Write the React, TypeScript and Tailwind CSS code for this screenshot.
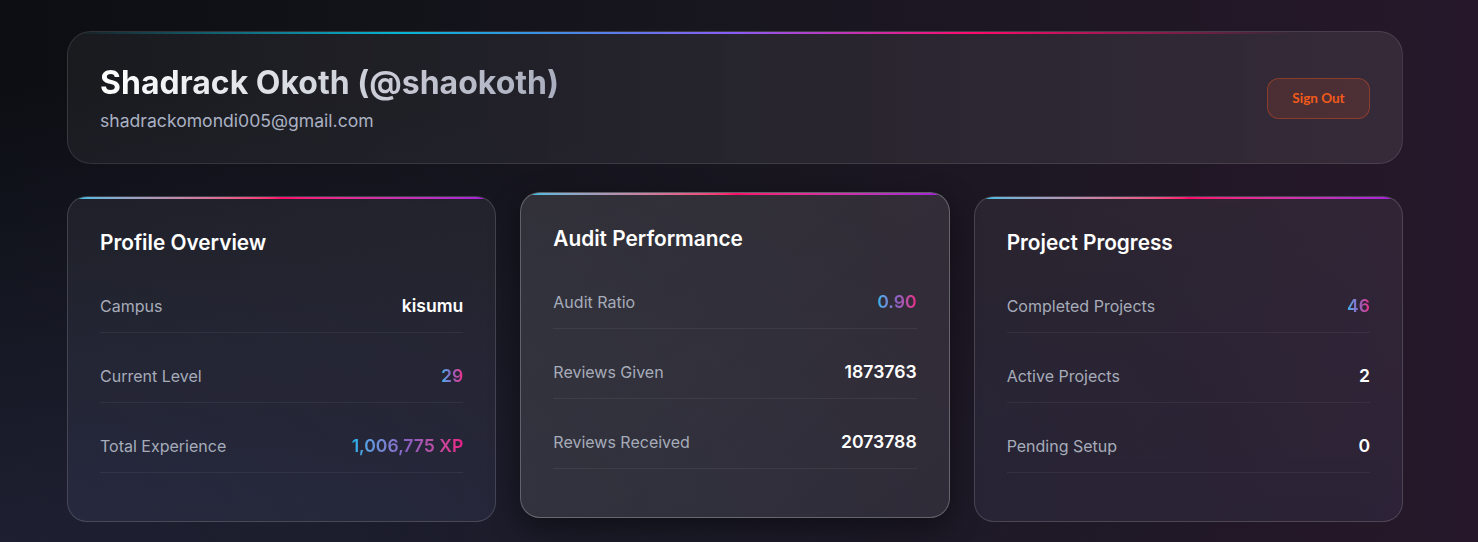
import React from 'react';

type Row = { label: string; value: string; accent?: boolean };

const cards: { title: string; rows: Row[]; lifted?: boolean }[] = [
  {
    title: 'Profile Overview',
    rows: [
      { label: 'Campus', value: 'kisumu' },
      { label: 'Current Level', value: '29', accent: true },
      { label: 'Total Experience', value: '1,006,775 XP', accent: true },
    ],
  },
  {
    title: 'Audit Performance',
    lifted: true,
    rows: [
      { label: 'Audit Ratio', value: '0.90', accent: true },
      { label: 'Reviews Given', value: '1873763' },
      { label: 'Reviews Received', value: '2073788' },
    ],
  },
  {
    title: 'Project Progress',
    rows: [
      { label: 'Completed Projects', value: '46', accent: true },
      { label: 'Active Projects', value: '2' },
      { label: 'Pending Setup', value: '0' },
    ],
  },
];

const StatCard: React.FC<{ title: string; rows: Row[]; lifted?: boolean }> = ({ title, rows, lifted }) => (
  <div
    className={
      lifted
        ? 'relative overflow-hidden rounded-[20px] border border-white/25 bg-gradient-to-br from-white/[0.12] to-white/[0.08] px-8 pt-8 pb-12 -translate-y-1 shadow-[0_10px_30px_rgba(0,0,0,0.45)]'
        : 'relative overflow-hidden rounded-[20px] border border-white/15 bg-gradient-to-b from-white/[0.06] to-[#8a96d0]/[0.09] px-8 pt-8 pb-12'
    }
  >
    {/* top accent line */}
    <div className="absolute top-0 left-0 right-0 h-[2px] bg-gradient-to-r from-[#0fc0e8] via-[#ff0a6c] to-[#a21ee0]" />
    <h3 className="text-[20.8px] leading-7 font-semibold text-white mb-[22px]">{title}</h3>
    <div className="flex flex-col gap-4">
      {rows.map((r) => (
        <div key={r.label} className="flex items-center justify-between pt-[15px] pb-[14px] border-b border-white/[0.06]">
          <span className="text-[16px] leading-6 text-[#a6acb9]">{r.label}</span>
          {r.accent ? (
            <span className="text-[17.6px] leading-6 font-semibold bg-gradient-to-r from-[#17b3ec] via-[#8b5fc2] to-[#ec1b86] bg-clip-text text-transparent">
              {r.value}
            </span>
          ) : (
            <span className="text-[17.6px] leading-6 font-semibold text-white">{r.value}</span>
          )}
        </div>
      ))}
    </div>
  </div>
);

export default function App() {
  return (
    <div
      className="min-h-[542px] w-full bg-[#16151e] bg-[radial-gradient(ellipse_at_bottom_left,rgba(38,40,64,0.7),transparent_60%),linear-gradient(90deg,#0c0e13_0%,#18161f_50%,#26182a_100%)] pl-[67px] pr-[75px] pt-[31px] pb-8"
      style={{ fontFamily: 'Inter, "Noto Sans", sans-serif' }}
    >
      {/* Header */}
      <div className="relative overflow-hidden rounded-3xl border border-white/10 bg-gradient-to-r from-white/[0.05] to-white/[0.08] pl-8 pr-8 pt-8 pb-[30px] flex items-center justify-between mb-[32px]">
        <div className="absolute top-0 left-0 right-0 h-[2px] bg-[linear-gradient(90deg,transparent_0%,#06b6d4_25%,#8b5cf6_50%,#ff0a6c_68%,transparent_92%)]" />
        <div>
          <h1 className="text-[32px] leading-[38px] font-bold bg-gradient-to-r from-white to-[#a9adbd] bg-clip-text text-transparent w-fit">
            Shadrack Okoth (@shaokoth)
          </h1>
          <p className="mt-[7px] text-[17.6px] leading-6 text-[#aab1c2]">shadrackomondi005@gmail.com</p>
        </div>
        <button
          className="h-[41px] w-[103px] rounded-xl border border-[#ff5a1f]/35 bg-[#ff5a1f]/[0.12] text-[13.5px] font-bold text-[#f25a1a]"
          style={{ fontFamily: 'Lato, "Open Sans", sans-serif' }}
        >
          Sign Out
        </button>
      </div>

      {/* Cards */}
      <div className="grid grid-cols-3 gap-6">
        {cards.map((c) => (
          <StatCard key={c.title} title={c.title} rows={c.rows} lifted={c.lifted} />
        ))}
      </div>
    </div>
  );
}
